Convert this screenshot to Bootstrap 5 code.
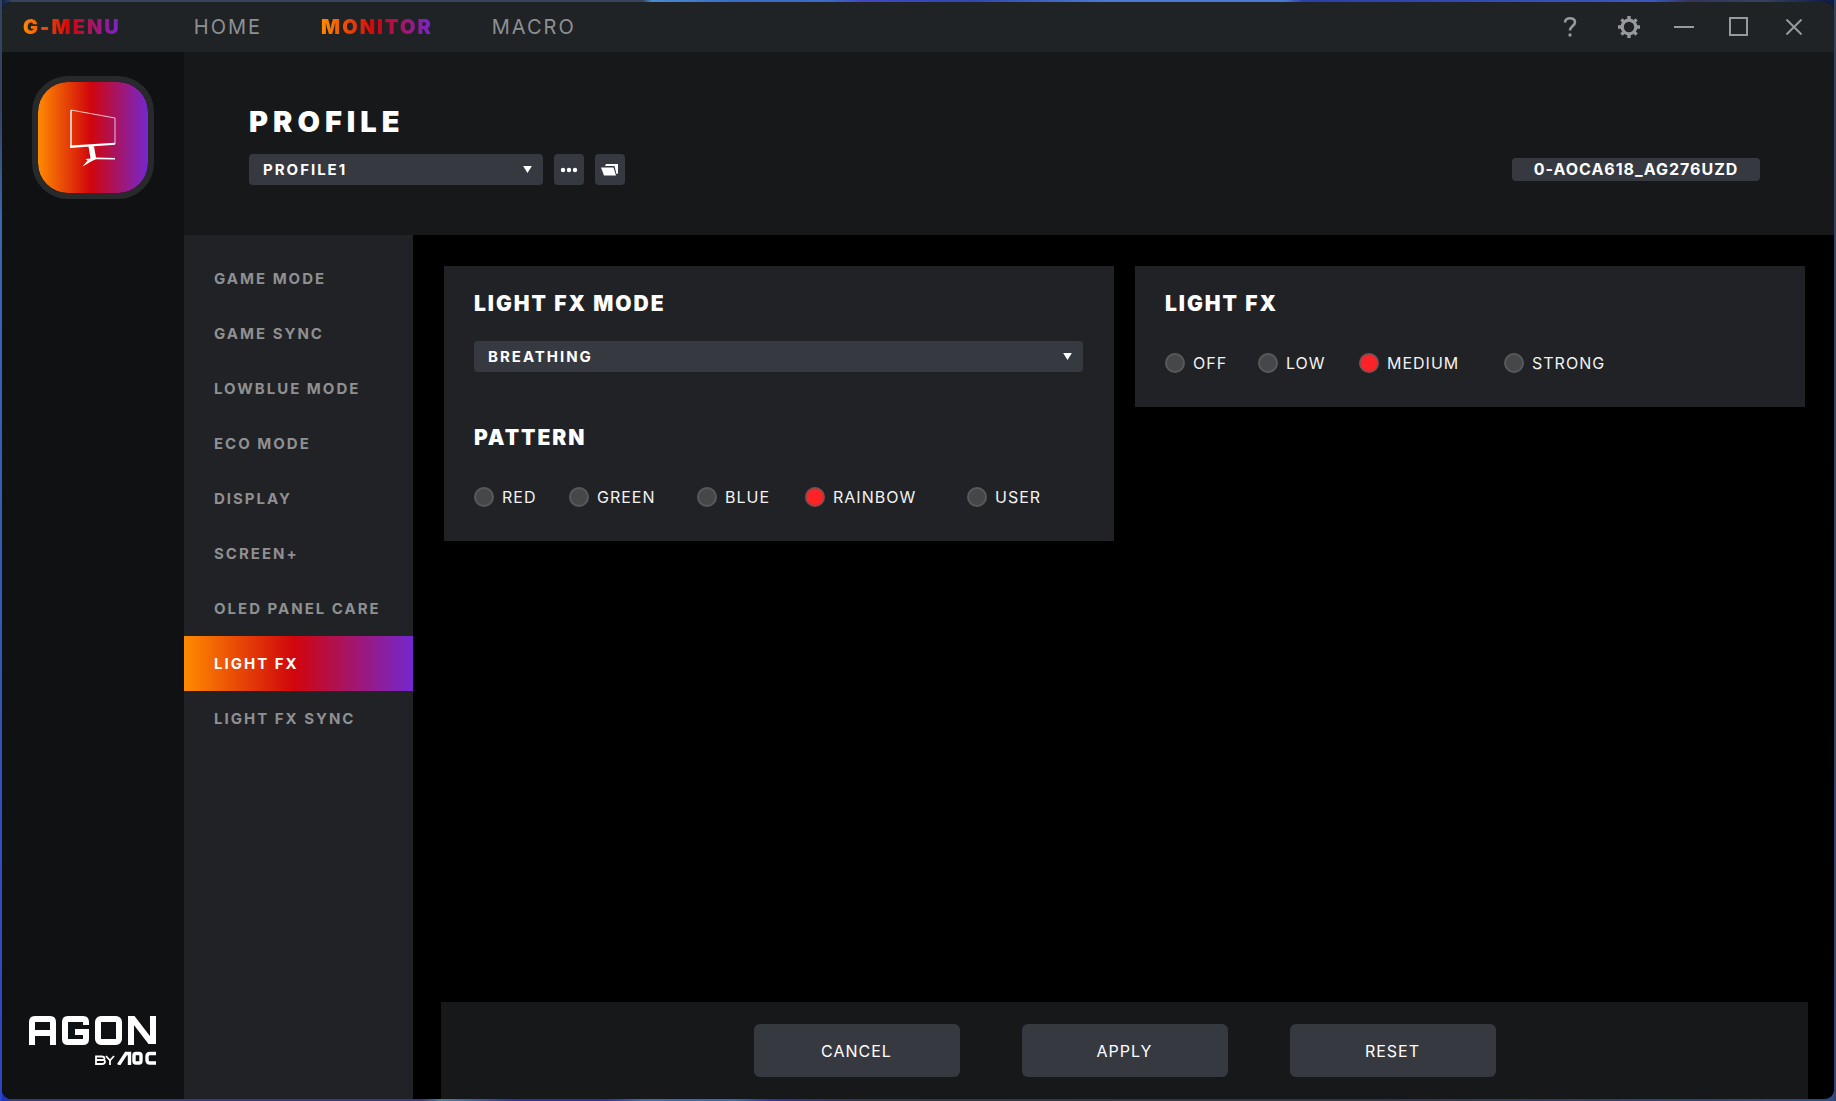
<!DOCTYPE html>
<html lang="en">
<head>
<meta charset="utf-8">
<meta name="viewport" content="width=device-width, initial-scale=1">
<title>G-Menu</title>
<link rel="stylesheet" href="https://cdn.jsdelivr.net/npm/bootstrap@5.3.0/dist/css/bootstrap.min.css">
<style>
:root{--fx:linear-gradient(90deg,#ff8a00 0%,#d1050c 48%,#7427cf 100%)}
body{font-family:Inter,"Noto Sans",sans-serif;color:#fff;font-size:14px;letter-spacing:1px;
 background:linear-gradient(90deg,#0a1a4a 0,#35435c 12px,#35435c 35%,#4a8ad0 35.5%,#3a6cc4 40%,#3b6cc8 45%,#4048c0 47%,#3048b0 53%,#4a78d0 60%,#4a78d0 70%,#2c3fa8 71%,#3a58c0 90%,#34345c 92%,#34425c 96%,#0a1a4a 100%)}
.desk{padding:2px;background:linear-gradient(180deg,#33445f 0,#33445f 10%,#3a68b0 20%,#2c46c0 100%) no-repeat left/2px 100%,
 linear-gradient(180deg,#34425c,#33456a) no-repeat right/2px 100%,
 linear-gradient(90deg,#1030d8 0,#363c80 12px,#363c80 23%,#5080a0 24%,#3034a0 28%,#3034a0 33%,#4068b8 35%,#3a68b0 40%,#3034a0 42%,#34364a 47%,#34344a 75%,#2f4c88 100%) no-repeat bottom/100% 12px}
.win{background:#000;border-radius:9px;overflow:hidden}
.topbar{height:50px;background:#1f2326}
.brand,.on-tab{background:var(--fx);-webkit-background-clip:text;background-clip:text;color:transparent!important;font-weight:900}
.brand{font-size:20px;line-height:24px;letter-spacing:2px;margin-left:21px;text-decoration:none;white-space:nowrap;min-width:97px}
.tabs{margin-left:73px;gap:59px}
.tabs a{font-size:20px;line-height:24px;letter-spacing:2px;color:#8f9091;text-decoration:none}
.winbtns{margin-right:18px;gap:11px}
.winbtns button,.sq{background:none;border:0;padding:0;color:#98999a;display:flex;align-items:center;justify-content:center}
.winbtns button{width:44px;height:40px}
.rail{width:182px;background:#101113;padding:24px 27px 34px}
.tile{width:122px;height:123px;border-radius:36px;border:6px solid #28292b;background:var(--fx) padding-box}
.phead{background:#17181a;height:183px;padding:0 74px 50px 65px}
h1{font-size:29px;line-height:32px;font-weight:900;letter-spacing:5px;margin:0 0 16px}
h2{font-size:21px;line-height:24px;font-weight:900;letter-spacing:2px;margin:0}
.pickrow{gap:11px}
.pick{appearance:none;height:31px;border:0;border-radius:4px;color:#fff;font-weight:700;font-size:15px;letter-spacing:2px;padding:0 32px 0 14px;line-height:31px;
 background:#373941 url("data:image/svg+xml,%3Csvg xmlns='http://www.w3.org/2000/svg' viewBox='0 0 10 8'%3E%3Cpath fill='%23fff' d='M0 0h10L5 8z'/%3E%3C/svg%3E") no-repeat right 11px center/9px 7px}
.pick-profile{width:294px}
.pick-mode{margin:25px 0 54px}
.sq{width:30px;height:31px;border-radius:4px;background:#373941;color:#fff}
.devid{width:248px;height:23px;margin-bottom:4px;border-radius:4px;background:#373941;font-weight:700;font-size:16px;line-height:23px;letter-spacing:1px;text-align:center}
.menu{width:229px;background:#212226;padding-top:16px}
.menu a{height:55px;line-height:55px;padding-left:30px;font-weight:700;font-size:15px;letter-spacing:2px;color:#8f9091;text-decoration:none;white-space:nowrap}
.menu a.active{background:var(--fx);color:#fff}
.panes{padding:31px 29px 31px 31px;gap:21px}
.pane{flex:1 1 0;background:#212226;padding:26px 31px 34px 30px}
.opts{display:grid;row-gap:8px;margin-top:37px}
.opts-a{grid-template-columns:95px 128px 108px 162px auto}
.opts-b{grid-template-columns:93px 101px 145px auto}
.opts label{display:flex;align-items:center;gap:8px;font-size:16px;line-height:20px;color:#f2f2f2;white-space:nowrap}
.opts input{appearance:none;width:20px;height:20px;margin:0;border-radius:50%;background:#464749;border:2px solid #58595b;flex:none}
.opts input:checked{background:#ff2226;border-color:#8d4a4d}
.actions{background:#17181a;margin:0 26px 0 28px;height:97px;gap:62px}
.act{width:206px;height:53px;border:0;border-radius:6px;background:#373941;color:#fff;font-size:16px;letter-spacing:1px}
</style>
</head>
<body>
<div class="desk min-vh-100 d-flex">
<div class="win flex-grow-1 d-flex flex-column">
 <header class="topbar d-flex align-items-center">
  <a class="brand" href="#">G-MENU</a>
  <nav class="tabs d-flex"><a href="#">HOME</a><a href="#" class="on-tab">MONITOR</a><a href="#">MACRO</a></nav>
  <div class="winbtns d-flex ms-auto">
   <button aria-label="Help"><svg width="14" height="22" viewBox="0 0 14 22" fill="none" stroke="currentColor" stroke-width="2.6"><path d="M2 6.500C2 .8 12 .8 12 6.200c0 3.600-5 4-5 8.300"/><circle cx="7" cy="19" r="1" fill="currentColor" stroke-width="1.400"/></svg></button>
   <button class="ms-1" aria-label="Settings"><svg width="22" height="22" viewBox="-11 -11 22 22" fill="none" stroke="currentColor"><circle r="6.800" stroke-width="3.200"/><path stroke-width="3.400" d="M0-7.500V-11M0 7.500V11M-7.500 0H-11M7.500 0H11M5.400-5.400l2.200-2.200M-5.400-5.400l-2.200-2.200M5.400 5.400l2.200 2.200M-5.400 5.400l-2.200 2.200"/></svg></button>
   <button aria-label="Minimize"><svg width="20" height="20" stroke="currentColor" stroke-width="2"><path d="M0 10h20"/></svg></button>
   <button aria-label="Maximize"><svg width="20" height="20" fill="none" stroke="currentColor" stroke-width="2"><path d="M1 1h17v17H1z"/></svg></button>
   <button aria-label="Close"><svg width="16" height="16" stroke="currentColor" stroke-width="2"><path d="M.5.5l15 15M15.500.5l-15 15"/></svg></button>
  </div>
 </header>
 <div class="d-flex flex-grow-1">
  <aside class="rail d-flex flex-column justify-content-between flex-shrink-0">
   <a class="tile d-block align-self-center" href="#" aria-label="Monitor"><svg class="d-block" width="110" height="111" viewBox="0 0 110 111" fill="none" stroke="#fff"><path stroke-width="1.4" d="M33 28v36"/><path stroke-width="1" stroke-opacity=".75" d="M33 28l44 8v26"/><path fill="#fff" stroke="none" d="M32 63.5l45-2.8v2L32 66zM50.500 64.500h5.500l2 11 19 .5v1.500l-19-.2c-5 1.500-8 4.500-13.500 7.200l5-6-2-1.500 5-.5z"/></svg></a>
   <svg width="128" height="49" viewBox="2 0 128 49" fill="none" stroke="#fff" role="img" aria-label="AGON by AOC"><g stroke-width="6"><path d="M5 29V6q0-3 3-3h15q3 0 3 3v23M5 17h21"/><path d="M59 9V6q0-3-3-3H41q-3 0-3 3v17q0 3 3 3h15q3 0 3-3v-7H48"/><rect x="71" y="3" width="21" height="23" rx="3"/><path d="M104 29V3h2l17 22h3V0"/></g><g stroke-width="1.800"><path d="M69 40.500h5.500q3 0 3 2t-3 1.500q3.500-.5 3.500 1.700t-3 2.300H69zM69 44h6M79 40l4 4.500 4-4.500M83 44v5"/></g><g stroke-width="3.400"><path d="M91.500 49l7.500-11.500h3.500V49"/><rect x="107" y="37.500" width="7" height="9.500" rx="2"/><path d="M129 37.500h-6q-3 0-3 3v3.500q0 3 3 3h6"/></g></svg>
  </aside>
  <main class="flex-grow-1 d-flex flex-column">
   <section class="phead d-flex align-items-end">
    <div><h1>PROFILE</h1>
     <div class="pickrow d-flex">
      <select class="pick pick-profile" aria-label="Profile"><option>PROFILE1</option></select>
      <button class="sq" aria-label="More"><svg width="18" height="6" fill="currentColor"><circle cx="3" cy="3" r="2.200"/><circle cx="9" cy="3" r="2.200"/><circle cx="15" cy="3" r="2.200"/></svg></button>
      <button class="sq" aria-label="Open folder"><svg width="18" height="14" fill="currentColor"><path d="M0 4.500h12.500l2.500 8H3zM4 3l1-2h12v9.500l-1.500.5-2-8z"/></svg></button>
     </div></div>
    <div class="devid ms-auto">0-AOCA618_AG276UZD</div>
   </section>
   <div class="d-flex flex-grow-1">
    <nav class="menu d-flex flex-column flex-shrink-0">
     <a href="#">GAME MODE</a><a href="#">GAME SYNC</a><a href="#">LOWBLUE MODE</a><a href="#">ECO MODE</a><a href="#">DISPLAY</a><a href="#">SCREEN+</a><a href="#">OLED PANEL CARE</a><a href="#" class="active">LIGHT FX</a><a href="#">LIGHT FX SYNC</a>
    </nav>
    <div class="flex-grow-1 d-flex flex-column justify-content-between">
     <div class="panes d-flex align-items-start">
      <section class="pane">
       <h2>LIGHT FX MODE</h2>
       <select class="pick pick-mode d-block w-100" aria-label="Light FX mode"><option>BREATHING</option></select>
       <h2>PATTERN</h2>
       <div class="opts opts-a">
        <label><input type="radio" name="pattern">RED</label><label><input type="radio" name="pattern">GREEN</label><label><input type="radio" name="pattern">BLUE</label><label><input type="radio" name="pattern" checked>RAINBOW</label><label><input type="radio" name="pattern">USER</label>
       </div>
      </section>
      <section class="pane">
       <h2>LIGHT FX</h2>
       <div class="opts opts-b">
        <label><input type="radio" name="fx">OFF</label><label><input type="radio" name="fx">LOW</label><label><input type="radio" name="fx" checked>MEDIUM</label><label><input type="radio" name="fx">STRONG</label>
       </div>
      </section>
     </div>
     <footer class="actions d-flex justify-content-center align-items-center">
      <button class="act">CANCEL</button><button class="act">APPLY</button><button class="act">RESET</button>
     </footer>
    </div>
   </div>
  </main>
 </div>
</div>
</div>
<script src="https://cdn.jsdelivr.net/npm/bootstrap@5.3.0/dist/js/bootstrap.bundle.min.js"></script>
</body>
</html>
